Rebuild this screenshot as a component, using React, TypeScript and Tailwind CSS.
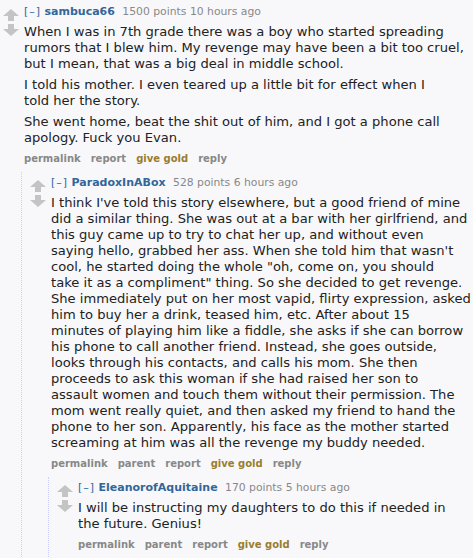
import React from "react";

type CommentData = {
  author: string;
  points: string;
  time: string;
  paragraphs: string[][];
  showParent?: boolean;
  child?: CommentData;
};

const thread: CommentData = {
  author: "sambuca66",
  points: "1500 points",
  time: "10 hours ago",
  paragraphs: [
    [
      "When I was in 7th grade there was a boy who started spreading",
      "rumors that I blew him. My revenge may have been a bit too cruel,",
      "but I mean, that was a big deal in middle school.",
    ],
    ["I told his mother. I even teared up a little bit for effect when I", "told her the story."],
    ["She went home, beat the shit out of him, and I got a phone call", "apology. Fuck you Evan."],
  ],
  child: {
    author: "ParadoxInABox",
    points: "528 points",
    time: "6 hours ago",
    showParent: true,
    paragraphs: [
      [
        "I think I've told this story elsewhere, but a good friend of mine",
        "did a similar thing. She was out at a bar with her girlfriend, and",
        "this guy came up to try to chat her up, and without even",
        "saying hello, grabbed her ass. When she told him that wasn't",
        "cool, he started doing the whole \"oh, come on, you should",
        "take it as a compliment\" thing. So she decided to get revenge.",
        "She immediately put on her most vapid, flirty expression, asked",
        "him to buy her a drink, teased him, etc. After about 15",
        "minutes of playing him like a fiddle, she asks if she can borrow",
        "his phone to call another friend. Instead, she goes outside,",
        "looks through his contacts, and calls his mom. She then",
        "proceeds to ask this woman if she had raised her son to",
        "assault women and touch them without their permission. The",
        "mom went really quiet, and then asked my friend to hand the",
        "phone to her son. Apparently, his face as the mother started",
        "screaming at him was all the revenge my buddy needed.",
      ],
    ],
    child: {
      author: "EleanorofAquitaine",
      points: "170 points",
      time: "5 hours ago",
      showParent: true,
      paragraphs: [["I will be instructing my daughters to do this if needed in", "the future. Genius!"]],
    },
  },
};

function Arrows() {
  return (
    <div className="flex flex-col items-center w-[16px] shrink-0 pt-[8px] gap-[3px]">
      <svg width="16" height="12" viewBox="0 0 16 12">
        <path d="M8 0 L16 7 L11 7 L11 12 L5 12 L5 7 L0 7 Z" fill="#c4c4c4" />
      </svg>
      <svg width="16" height="12" viewBox="0 0 16 12">
        <path d="M8 12 L16 5 L11 5 L11 0 L5 0 L5 5 L0 5 Z" fill="#c4c4c4" />
      </svg>
    </div>
  );
}

function Comment({ data, level }: { data: CommentData; level: number }) {
  const buttons = ["permalink", ...(data.showParent ? ["parent"] : []), "report", "give gold", "reply"];
  return (
    <div className={level === 0 ? "flex pl-[3px]" : "flex pl-[8px]"}>
      <Arrows />
      <div className="flex-1 ml-[5px] min-w-0">
        <p className="text-[10.8px] leading-[14px] pt-[4px] text-[#888] whitespace-nowrap">
          <span className="text-[11px] tracking-[1px] text-[#369]">[–]</span>{" "}
          <span className="text-[11px] font-bold text-[#369]">{data.author}</span>{" "}
          <span className="ml-[4px]">{data.points}</span> {data.time}
        </p>
        <div className="mt-[5px] text-[13.1px] leading-[16px] text-[#222]">
          {data.paragraphs.map((lines, i) => (
            <p key={i} className="mb-[5px]">
              {lines.map((l, j) => (
                <span key={j} className="block whitespace-nowrap">
                  {l}
                </span>
              ))}
            </p>
          ))}
        </div>
        <ul className="flex gap-[10px] text-[10px] font-bold leading-[14px] pt-[1px] pb-[5px]">
          {buttons.map((b) => (
            <li key={b} className={b === "give gold" ? "text-[#9a7d2e]" : "text-[#888]"}>
              {b}
            </li>
          ))}
        </ul>
        {data.child && (
          <div className="-ml-[3px] border-l border-dotted border-[#ccf] mt-[1px]">
            <Comment data={data.child} level={level + 1} />
          </div>
        )}
      </div>
    </div>
  );
}

export default function App() {
  return (
    <div
      className="w-[473px] h-[558px] overflow-hidden bg-[#f8f8fb] pt-[1px]"
      style={{ fontFamily: "Verdana, 'DejaVu Sans', sans-serif" }}
    >
      <Comment data={thread} level={0} />
    </div>
  );
}
